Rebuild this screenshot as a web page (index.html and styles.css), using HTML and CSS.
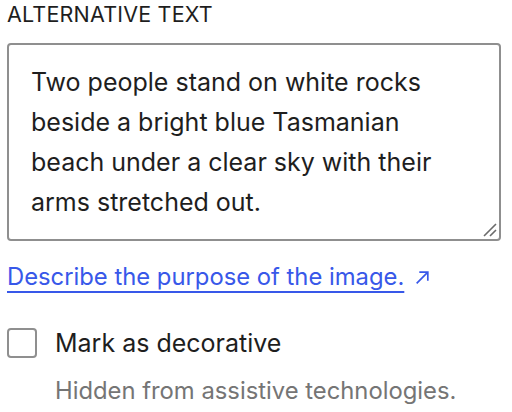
FILE: index.html
```html
<!DOCTYPE html>
<html lang="en">

<head>
    <meta charset="UTF-8">
    <meta name="viewport" content="width=device-width, initial-scale=1.0">
    <title>Alternative text</title>

    <link rel="stylesheet" href="styles.css">
</head>

<body>
    <div class="panel">
        <label class="fieldLabel" for="alt">Alternative text</label>
        <div class="inputWrap">
            <textarea id="alt" class="altInput" rows="4">Two people stand on white rocks beside a bright blue Tasmanian beach under a clear sky with their arms stretched out.</textarea>
            <!-- resize grip -->
            <svg class="grip" width="14" height="14" viewBox="0 0 14 14">
                <path d="M1 13 L13 1 M7 13 L13 7" fill="none" stroke="#6b6b6b" stroke-width="1.6"/>
            </svg>
        </div>

        <a class="helpLink" href="#">Describe the purpose of the image.<span class="arrow">
            <svg width="17" height="17" viewBox="0 0 16 16">
                <path d="M2.5 13.5 L13 3 M5 3 H13 V11" fill="none" stroke="#3858e9" stroke-width="1.6"/>
            </svg>
        </span></a>

        <div class="checkRow">
            <span class="box"></span>
            <span class="checkText">Mark as decorative</span>
        </div>
        <p class="hint">Hidden from assistive technologies.</p>
    </div>
</body>

</html>
```

FILE: styles.css
```css
* {
    box-sizing: border-box;
}

body {
    margin: 0;
    background-color: #fff;
    font-family: Inter, "Noto Sans", sans-serif;
    color: #1e1e1e;
}

.panel {
    width: 494px;
    margin-left: 7px;
    display: flex;
    flex-direction: column;
}

.fieldLabel {
    font-size: 21.5px;
    line-height: 28px;
    text-transform: uppercase;
    letter-spacing: 0.2px;
    margin-bottom: 15px;
}

.inputWrap {
    position: relative;
    height: 198px;
}

.altInput {
    width: 494px;
    height: 198px;
    padding: 17px 22px 0;
    border: 2px solid #8f8f8f;
    border-radius: 4px;
    font-family: inherit;
    font-size: 25px;
    line-height: 40px;
    color: #1e1e1e;
    resize: none;
    outline: none;
    display: block;
}

.grip {
    position: absolute;
    right: 4px;
    bottom: 4px;
}

.helpLink {
    margin-top: 21px;
    font-size: 23.8px;
    line-height: 30px;
    color: #3858e9;
    text-decoration: underline;
    text-underline-offset: 6px;
    text-decoration-thickness: 2px;
    display: flex;
    align-items: center;
}

.arrow {
    margin-left: 10px;
    display: inline-flex;
}

.checkRow {
    margin-top: 36px;
    display: flex;
    align-items: center;
    gap: 18px;
}

.box {
    width: 30px;
    height: 30px;
    border: 2px solid #8f8f8f;
    border-radius: 4px;
}

.checkText {
    font-size: 25px;
    line-height: 30px;
}

.hint {
    margin: 18px 0 0 48px;
    font-size: 23.8px;
    line-height: 30px;
    color: #757575;
}
```
